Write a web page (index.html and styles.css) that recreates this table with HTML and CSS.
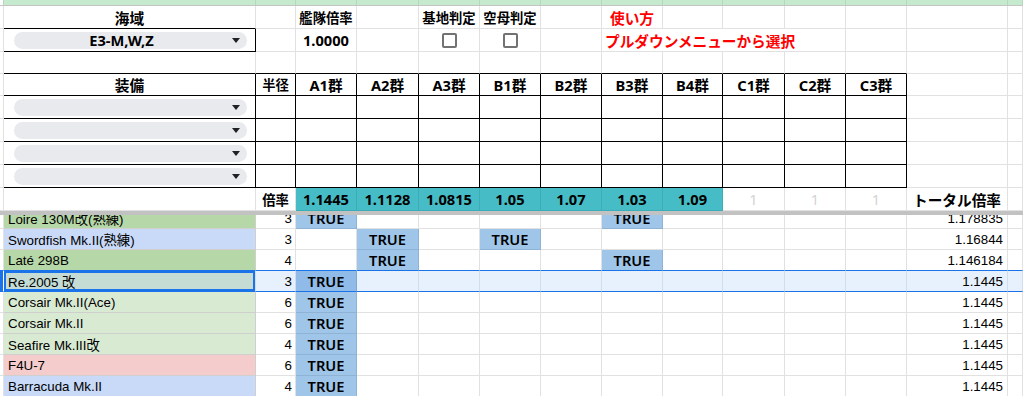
FILE: index.html
```html
<!DOCTYPE html>
<html lang="ja">
<head>
<meta charset="utf-8">
<title>基地航空隊 倍率計算</title>
<link rel="stylesheet" href="styles.css">
</head>
<body>
<div class="sheet">
  <div class="frozen">
    <!-- band: tail of the row above -->
    <div class="row r-strip">
      <div class="c stub"></div><div class="c"></div><div class="c"></div><div class="c"></div><div class="c"></div><div class="c"></div><div class="c"></div><div class="c"></div><div class="c"></div><div class="c"></div><div class="c"></div><div class="c"></div><div class="c"></div><div class="c"></div><div class="c"></div>
    </div>

    <!-- labels -->
    <div class="row r-23">
      <div class="c stub"></div>
      <div class="c hd bk-b">海域</div>
      <div class="c"></div>
      <div class="c hd-s">艦隊倍率</div>
      <div class="c"></div>
      <div class="c hd-s">基地判定</div>
      <div class="c hd-s">空母判定</div>
      <div class="c"></div>
      <div class="c hd red">使い方</div>
      <div class="c"></div><div class="c"></div><div class="c"></div><div class="c"></div><div class="c"></div><div class="c"></div>
    </div>

    <!-- controls -->
    <div class="row r-23">
      <div class="c stub"></div>
      <div class="c bk"><div class="chip"><span class="chip-label">E3-M,W,Z</span><span class="chip-caret"></span></div></div>
      <div class="c"></div>
      <div class="c hd">1.0000</div>
      <div class="c"></div>
      <div class="c"><span class="check"></span></div>
      <div class="c"><span class="check"></span></div>
      <div class="c"></div>
      <div class="c hd red left span4">プルダウンメニューから選択</div>
      <div class="c"></div><div class="c"></div><div class="c"></div>
    </div>

    <!-- spacer above the equipment table -->
    <div class="row r-22">
      <div class="c stub"></div>
      <div class="c bk-b"></div><div class="c bk-b"></div><div class="c bk-b"></div><div class="c bk-b"></div><div class="c bk-b"></div><div class="c bk-b"></div><div class="c bk-b"></div><div class="c bk-b"></div><div class="c bk-b"></div><div class="c bk-b"></div><div class="c bk-b"></div><div class="c bk-b"></div>
      <div class="c"></div><div class="c"></div>
    </div>

    <!-- equipment table header -->
    <div class="row r-22">
      <div class="c stub"></div>
      <div class="c hd bk">装備</div>
      <div class="c hd-s bk">半径</div>
      <div class="c hd bk">A1群</div>
      <div class="c hd bk">A2群</div>
      <div class="c hd bk">A3群</div>
      <div class="c hd bk">B1群</div>
      <div class="c hd bk">B2群</div>
      <div class="c hd bk">B3群</div>
      <div class="c hd bk">B4群</div>
      <div class="c hd bk">C1群</div>
      <div class="c hd bk">C2群</div>
      <div class="c hd bk">C3群</div>
      <div class="c"></div><div class="c"></div>
    </div>

    <!-- equipment slots -->
    <div class="row r-23">
      <div class="c stub"></div>
      <div class="c bk"><div class="chip"><span class="chip-label"></span><span class="chip-caret"></span></div></div>
      <div class="c bk"></div><div class="c bk"></div><div class="c bk"></div><div class="c bk"></div><div class="c bk"></div><div class="c bk"></div><div class="c bk"></div><div class="c bk"></div><div class="c bk"></div><div class="c bk"></div><div class="c bk"></div>
      <div class="c"></div><div class="c"></div>
    </div>
    <div class="row r-23">
      <div class="c stub"></div>
      <div class="c bk"><div class="chip"><span class="chip-label"></span><span class="chip-caret"></span></div></div>
      <div class="c bk"></div><div class="c bk"></div><div class="c bk"></div><div class="c bk"></div><div class="c bk"></div><div class="c bk"></div><div class="c bk"></div><div class="c bk"></div><div class="c bk"></div><div class="c bk"></div><div class="c bk"></div>
      <div class="c"></div><div class="c"></div>
    </div>
    <div class="row r-23">
      <div class="c stub"></div>
      <div class="c bk"><div class="chip"><span class="chip-label"></span><span class="chip-caret"></span></div></div>
      <div class="c bk"></div><div class="c bk"></div><div class="c bk"></div><div class="c bk"></div><div class="c bk"></div><div class="c bk"></div><div class="c bk"></div><div class="c bk"></div><div class="c bk"></div><div class="c bk"></div><div class="c bk"></div>
      <div class="c"></div><div class="c"></div>
    </div>
    <div class="row r-23">
      <div class="c stub"></div>
      <div class="c bk"><div class="chip"><span class="chip-label"></span><span class="chip-caret"></span></div></div>
      <div class="c bk"></div><div class="c bk"></div><div class="c bk"></div><div class="c bk"></div><div class="c bk"></div><div class="c bk"></div><div class="c bk"></div><div class="c bk"></div><div class="c bk"></div><div class="c bk"></div><div class="c bk"></div>
      <div class="c"></div><div class="c"></div>
    </div>

    <!-- per-group multipliers -->
    <div class="row r-23">
      <div class="c stub"></div>
      <div class="c"></div>
      <div class="c hd-s">倍率</div>
      <div class="c hd teal">1.1445</div>
      <div class="c hd teal">1.1128</div>
      <div class="c hd teal">1.0815</div>
      <div class="c hd teal">1.05</div>
      <div class="c hd teal">1.07</div>
      <div class="c hd teal">1.03</div>
      <div class="c hd teal">1.09</div>
      <div class="c faint">1</div>
      <div class="c faint">1</div>
      <div class="c faint">1</div>
      <div class="c hd">トータル倍率</div>
      <div class="c"></div>
    </div>
  </div>

  <div class="freeze-bar"></div>

  <div class="viewport">
    <div class="rows">
      <div class="row r-21">
        <div class="c stub"></div>
        <div class="c name f-green">Loire 130M改(熟練)</div>
        <div class="c num">3</div>
        <div class="c t">TRUE</div><div class="c"></div><div class="c"></div><div class="c"></div><div class="c"></div><div class="c t">TRUE</div><div class="c"></div><div class="c"></div><div class="c"></div><div class="c"></div>
        <div class="c num total">1.178835</div>
        <div class="c"></div>
      </div>
      <div class="row r-21">
        <div class="c stub"></div>
        <div class="c name f-blue">Swordfish Mk.II(熟練)</div>
        <div class="c num">3</div>
        <div class="c"></div><div class="c t">TRUE</div><div class="c"></div><div class="c t">TRUE</div><div class="c"></div><div class="c"></div><div class="c"></div><div class="c"></div><div class="c"></div><div class="c"></div>
        <div class="c num total">1.16844</div>
        <div class="c"></div>
      </div>
      <div class="row r-21 pre-sel">
        <div class="c stub"></div>
        <div class="c name f-green">Laté 298B</div>
        <div class="c num">4</div>
        <div class="c"></div><div class="c t">TRUE</div><div class="c"></div><div class="c"></div><div class="c"></div><div class="c t">TRUE</div><div class="c"></div><div class="c"></div><div class="c"></div><div class="c"></div>
        <div class="c num total">1.146184</div>
        <div class="c"></div>
      </div>
      <div class="row r-21 sel">
        <div class="c stub"></div>
        <div class="c name f-mint active">Re.2005 改</div>
        <div class="c num">3</div>
        <div class="c t">TRUE</div><div class="c"></div><div class="c"></div><div class="c"></div><div class="c"></div><div class="c"></div><div class="c"></div><div class="c"></div><div class="c"></div><div class="c"></div>
        <div class="c num total">1.1445</div>
        <div class="c"></div>
      </div>
      <div class="row r-21">
        <div class="c stub"></div>
        <div class="c name f-mint">Corsair Mk.II(Ace)</div>
        <div class="c num">6</div>
        <div class="c t">TRUE</div><div class="c"></div><div class="c"></div><div class="c"></div><div class="c"></div><div class="c"></div><div class="c"></div><div class="c"></div><div class="c"></div><div class="c"></div>
        <div class="c num total">1.1445</div>
        <div class="c"></div>
      </div>
      <div class="row r-21">
        <div class="c stub"></div>
        <div class="c name f-mint">Corsair Mk.II</div>
        <div class="c num">6</div>
        <div class="c t">TRUE</div><div class="c"></div><div class="c"></div><div class="c"></div><div class="c"></div><div class="c"></div><div class="c"></div><div class="c"></div><div class="c"></div><div class="c"></div>
        <div class="c num total">1.1445</div>
        <div class="c"></div>
      </div>
      <div class="row r-21">
        <div class="c stub"></div>
        <div class="c name f-mint">Seafire Mk.III改</div>
        <div class="c num">4</div>
        <div class="c t">TRUE</div><div class="c"></div><div class="c"></div><div class="c"></div><div class="c"></div><div class="c"></div><div class="c"></div><div class="c"></div><div class="c"></div><div class="c"></div>
        <div class="c num total">1.1445</div>
        <div class="c"></div>
      </div>
      <div class="row r-21">
        <div class="c stub"></div>
        <div class="c name f-red">F4U-7</div>
        <div class="c num">6</div>
        <div class="c t">TRUE</div><div class="c"></div><div class="c"></div><div class="c"></div><div class="c"></div><div class="c"></div><div class="c"></div><div class="c"></div><div class="c"></div><div class="c"></div>
        <div class="c num total">1.1445</div>
        <div class="c"></div>
      </div>
      <div class="row r-21">
        <div class="c stub"></div>
        <div class="c name f-blue">Barracuda Mk.II</div>
        <div class="c num">4</div>
        <div class="c t">TRUE</div><div class="c"></div><div class="c"></div><div class="c"></div><div class="c"></div><div class="c"></div><div class="c"></div><div class="c"></div><div class="c"></div><div class="c"></div>
        <div class="c num total">1.1445</div>
        <div class="c"></div>
      </div>
    </div>
  </div>
</div>
</body>
</html>
```

FILE: styles.css
```css
html, body {
  margin: 0;
  padding: 0;
  background: #fff;
}

.sheet {
  width: 1023px;
  height: 396px;
  overflow: hidden;
  font-family: "Liberation Sans", "Noto Sans CJK JP", sans-serif;
  font-size: 13.33px;
  color: #000;
}

/* one spreadsheet row: row-header sliver, columns A..M, and a partial N */
.row {
  display: grid;
  grid-template-columns: 4px 252px 40px 61px 62px 61px 61px 61px 61px 60px 62px 61px 61px 101px 15px;
}

.r-strip { height: 6px; }
.r-23 { height: 23px; }
.r-22 { height: 22px; }
.r-21 { height: 21px; }

.c {
  box-sizing: border-box;
  min-width: 0;
  border-right: 1px solid #e1e1e1;
  border-bottom: 1px solid #e1e1e1;
  display: flex;
  align-items: center;
  justify-content: center;
  overflow: hidden;
  white-space: nowrap;
}

.r-strip .c {
  background: #c5eace;
  border-right-color: #b9d6c0;
  border-bottom-color: #c4c4c4;
}
.r-strip .stub { background: #fff; }

.stub { background: #fff; }

/* header text */
.hd {
  font-family: "Noto Sans", "Noto Sans CJK JP", sans-serif;
  font-weight: 700;
  font-size: 14.67px;
}
.hd-s {
  font-family: "Noto Sans", "Noto Sans CJK JP", sans-serif;
  font-weight: 700;
  font-size: 13.33px;
}
.red { color: #ff0000; }
.left { justify-content: flex-start; padding-left: 3px; }
.span4 { grid-column: span 4; }

/* black table borders */
.bk { border-right-color: #000; border-bottom-color: #000; }
.bk-b { border-bottom-color: #000; }

/* dropdown chip */
.chip {
  box-sizing: border-box;
  flex: 1;
  height: 17px;
  margin: 0 8px 0 10px;
  padding-right: 7px;
  border-radius: 9px;
  background: #e8eaed;
  display: flex;
  align-items: center;
}
.chip-label {
  flex: 1;
  text-align: center;
  font-family: "Noto Sans", "Noto Sans CJK JP", sans-serif;
  font-weight: 700;
  font-size: 14.67px;
  line-height: 17px;
}
.chip-caret {
  width: 0;
  height: 0;
  margin-left: 3px;
  border-left: 4px solid transparent;
  border-right: 4px solid transparent;
  border-top: 5px solid #202124;
}

/* checkbox */
.check {
  box-sizing: border-box;
  width: 15px;
  height: 15px;
  border: 2px solid #727272;
  border-radius: 2px;
}

/* multiplier band */
.teal {
  background: #46bdc6;
  border-right-color: #3cadb6;
  border-bottom-color: #3cadb6;
}
.faint {
  font-family: "Noto Sans", sans-serif;
  font-size: 14.67px;
  color: #d3d3d3;
}

.freeze-bar {
  height: 4px;
  background: #c2c2c2;
}

/* scrolled data area */
.viewport {
  height: 181px;
  overflow: hidden;
}
.rows {
  margin-top: -7px;
}

.name {
  justify-content: flex-start;
  padding-left: 4px;
  border-right-color: #cfcfcf;
  border-bottom-color: #cfcfcf;
}
.num {
  justify-content: flex-end;
  padding-right: 3px;
}
.total { padding-right: 4px; }

.f-green { background: #b6d7a8; }
.f-mint { background: #d9ead3; }
.f-blue { background: #c9daf8; }
.f-red { background: #f4cccc; }

.t {
  background: #9fc5e8;
  border-right-color: #8fb3d4;
  border-bottom-color: #8fb3d4;
  font-family: "Noto Sans", sans-serif;
  font-weight: 600;
  font-size: 14.67px;
}

/* selected row */
.pre-sel .c { border-bottom-color: #1a73e8; }
.sel .c {
  background: #e7f0fd;
  border-bottom-color: #1a73e8;
  border-right-color: #d3dcea;
}
.sel .stub { background: #1a73e8; border-right-color: #fff; }
.sel .f-mint { background: #c5dcd5; }
.sel .t { background: #90bbe8; border-right-color: #80a8d4; }
.active { box-shadow: inset 0 0 0 2px #1a73e8; }
```
